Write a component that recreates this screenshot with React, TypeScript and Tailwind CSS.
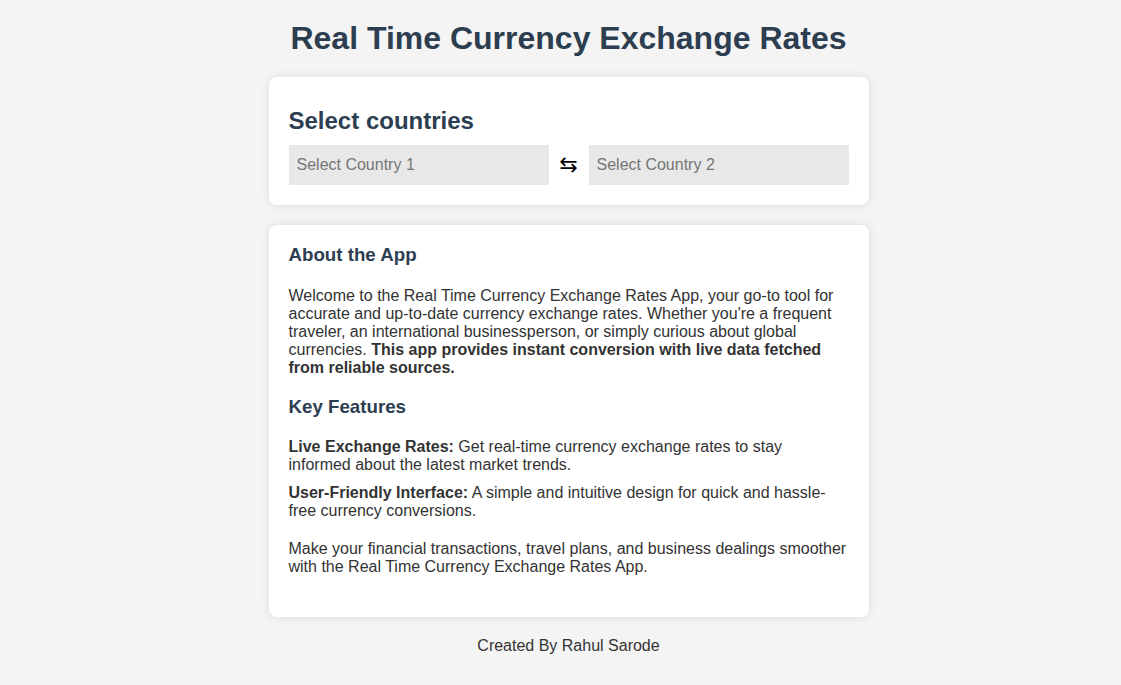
export default function App() {
  return (
    <div className="min-h-screen bg-[#f4f4f4] font-['Liberation_Sans',Arial,sans-serif] text-[#333]">
      <div className="flex flex-col items-center pl-4 pt-[20px] pb-[30px]">
        {/* Title */}
        <h1 className="text-[32px] leading-[37px] font-bold text-[#2c3e50]">
          Real Time Currency Exchange Rates
        </h1>

        {/* Select card */}
        <div className="mt-[20px] w-[600px] rounded-lg bg-white px-5 pt-[30px] pb-5 shadow-[0_0_10px_rgba(0,0,0,0.1)]">
          <h2 className="text-[24px] leading-[28px] font-bold text-[#2c3e50]">Select countries</h2>
          <div className="mt-[10px] flex items-center">
            <input
              placeholder="Select Country 1"
              className="h-10 w-[260px] bg-[#e8e8e8] px-2 text-base text-[#333] placeholder:text-[#757575] outline-none"
            />
            <div className="flex w-10 items-center justify-center text-[22px] leading-none text-black font-['DejaVu_Sans',sans-serif]">
              ⇆
            </div>
            <input
              placeholder="Select Country 2"
              className="h-10 w-[260px] bg-[#e8e8e8] px-2 text-base text-[#333] placeholder:text-[#757575] outline-none"
            />
          </div>
        </div>

        {/* About card */}
        <div className="mt-5 w-[600px] rounded-lg bg-white px-5 pt-[19px] pb-[41px] shadow-[0_0_10px_rgba(0,0,0,0.1)]">
          <h3 className="text-[18.72px] leading-[22px] font-bold text-[#2c3e50]">About the App</h3>
          <p className="mt-[21px] text-base leading-[18px]">
            Welcome to the Real Time Currency Exchange Rates App, your go-to tool for accurate and
            up-to-date currency exchange rates. Whether you're a frequent traveler, an international
            businessperson, or simply curious about global currencies.{" "}
            <b>This app provides instant conversion with live data fetched from reliable sources.</b>
          </p>

          <h3 className="mt-[19px] text-[18.72px] leading-[22px] font-bold text-[#2c3e50]">Key Features</h3>
          <p className="mt-[20px] text-base leading-[18px]">
            <b>Live Exchange Rates:</b> Get real-time currency exchange rates to stay informed about the
            latest market trends.
          </p>
          <p className="mt-[10px] text-base leading-[18px]">
            <b>User-Friendly Interface:</b> A simple and intuitive design for quick and hassle-free
            currency conversions.
          </p>
          <p className="mt-[20px] text-base leading-[18px]">
            Make your financial transactions, travel plans, and business dealings smoother with the Real
            Time Currency Exchange Rates App.
          </p>
        </div>

        {/* Footer */}
        <p className="mt-[20px] text-base leading-[18px] text-[#333]">Created By Rahul Sarode</p>
      </div>
    </div>
  )
}
